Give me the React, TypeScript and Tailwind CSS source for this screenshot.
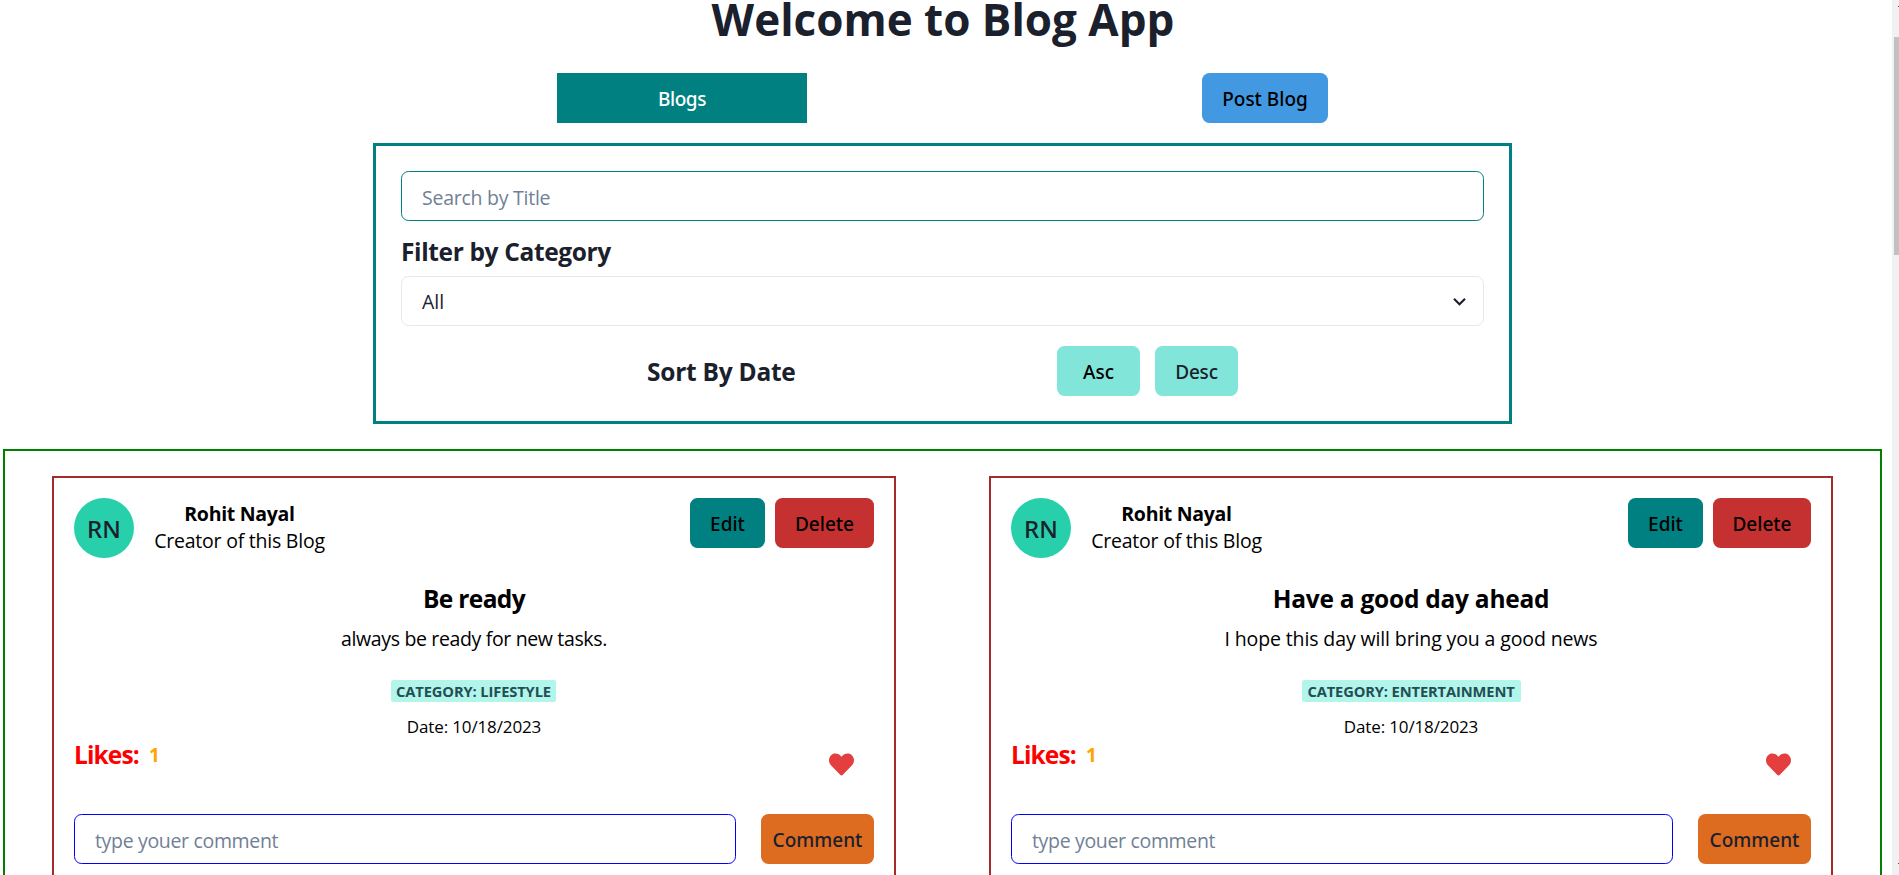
import { FaHeart } from "react-icons/fa";

const BUTTON =
  "flex h-[50px] items-center justify-center rounded-[7.5px] pt-[3px] font-['Noto_Sans'] text-[19px] font-medium";

type Post = {
  title: string;
  titleTracking: string;
  body: string;
  bodyTracking: string;
  category: string;
  badgeWidth: string;
  deleteWidth: string;
};

const POSTS: Post[] = [
  {
    title: "Be ready",
    titleTracking: "tracking-[-0.65px]",
    body: "always be ready for new tasks.",
    bodyTracking: "tracking-[-0.35px]",
    category: "CATEGORY: LIFESTYLE",
    badgeWidth: "w-[165px] mr-px",
    deleteWidth: "w-[99px]",
  },
  {
    title: "Have a good day ahead",
    titleTracking: "tracking-[-0.25px]",
    body: "I hope this day will bring you a good news",
    bodyTracking: "tracking-[-0.12px]",
    category: "CATEGORY: ENTERTAINMENT",
    badgeWidth: "w-[219px]",
    deleteWidth: "w-[98px]",
  },
];

function PostCard({ post }: { post: Post }) {
  return (
    <article className="flex w-[844px] flex-col border-2 border-[#a52a2a] p-5 text-black">
      <header className="flex h-[60px] items-start">
        <div className="flex size-[60px] items-center justify-center rounded-full bg-[#27cfab] pt-0.5 font-['Noto_Sans'] text-2xl font-medium text-[#1a202c]">
          RN
        </div>
        <div className="ml-[19.5px] mt-0.5 flex w-[172px] flex-col items-center whitespace-nowrap text-[19.5px] leading-[27px]">
          <span className="font-bold tracking-[-0.3px]">Rohit Nayal</span>
          <span className="tracking-[-0.23px]">Creator of this Blog</span>
        </div>
        <div className="ml-auto flex gap-2.5">
          <button className={`${BUTTON} w-[75px] bg-[#008080]`}>Edit</button>
          <button className={`${BUTTON} ${post.deleteWidth} bg-[#c53030]`}>Delete</button>
        </div>
      </header>

      <h2 className={`mt-[22px] text-center text-[24.5px] leading-[37px] font-bold ${post.titleTracking}`}>
        {post.title}
      </h2>
      <p className={`mt-[7px] text-center text-[19.5px] leading-[30px] ${post.bodyTracking}`}>{post.body}</p>
      <span
        className={`mt-[26px] flex h-[22px] items-center justify-center self-center whitespace-nowrap rounded-[2.5px] bg-[#b2f5ea] text-[14.7px] font-bold tracking-[-0.12px] text-[#234e52] ${post.badgeWidth}`}
      >
        {post.category}
      </span>
      <p className="mt-3.5 text-center text-[17px] leading-[22px] tracking-[-0.14px]">Date: 10/18/2023</p>

      <div className="flex h-[76px] items-start justify-between pr-5">
        <div className="flex items-center font-bold leading-[34px]">
          <span className="w-[75px] text-[24.5px] tracking-[-0.9px] text-[#ff0000]">Likes:</span>
          <span className="font-['Noto_Sans'] text-[19px] text-[#ffa500]">1</span>
        </div>
        <FaHeart className="mt-3.5 size-[25px] text-[#e53e3e]" />
      </div>

      <div className="flex gap-[25px]">
        <input
          placeholder="type youer comment"
          className="h-[50px] w-[662px] rounded-[7.5px] border border-[#0000ff] px-5 pt-[3px] text-[19.5px] tracking-[-0.33px] placeholder:text-[#718096]"
        />
        <button className={`${BUTTON} w-[113px] bg-[#dd6b20] text-[#1a202c]`}>Comment</button>
      </div>
    </article>
  );
}

export default function App() {
  return (
    <div className="flex h-[875px] w-[1899px] overflow-hidden bg-white font-['Open_Sans',sans-serif] text-[#1a202c]">
      <main className="mr-[7px] flex h-[1100px] w-[1885px] shrink-0 flex-col items-center">
        <h1 className="pl-px text-[44px] leading-[38px] font-bold">Welcome to Blog App</h1>

        <nav className="mt-[35px] flex w-[771px] justify-between">
          <a className="flex h-[50px] w-[250px] items-center justify-center bg-[#008080] pt-[3px] font-['Noto_Sans'] text-[19px] font-medium tracking-[-0.4px] text-white">
            Blogs
          </a>
          <button className={`${BUTTON} w-[126px] bg-[#4299e1] text-black`}>Post Blog</button>
        </nav>

        <section className="mt-5 flex w-[1139px] flex-col border-[3px] border-[#008080] p-[25px]">
          <input
            placeholder="Search by Title"
            className="h-[50px] rounded-[7.5px] border border-[#008080] px-5 pt-0.5 text-[19.5px] tracking-[-0.25px] placeholder:text-[#718096]"
          />
          <h2 className="mt-3 mb-1.5 text-[24.5px] leading-[37px] font-bold tracking-[-0.36px]">Filter by Category</h2>
          <div className="flex h-[50px] items-center justify-between rounded-[7.5px] border border-[#e2e8f0] pr-[11px] pl-5">
            <span className="pt-0.5 text-[19.5px]">All</span>
            <svg viewBox="0 0 24 24" className="size-[25px]" fill="currentColor">
              <path d="M16.59 8.59L12 13.17 7.41 8.59 6 10l6 6 6-6z" />
            </svg>
          </div>
          <div className="mt-5 flex items-center pl-[246px]">
            <h2 className="w-[410px] pt-0.5 text-[24.5px] font-bold tracking-[-0.25px]">Sort By Date</h2>
            <div className="flex gap-[15px]">
              <button className={`${BUTTON} w-[83px] bg-[#81e6d9] text-black`}>Asc</button>
              <button className={`${BUTTON} w-[83px] bg-[#81e6d9] tracking-[-0.2px]`}>Desc</button>
            </div>
          </div>
        </section>

        <section className="mt-[25px] flex w-[1879px] grow gap-[93px] border-2 border-[#008000] px-[47px] pt-[25px]">
          {POSTS.map((post) => (
            <PostCard key={post.title} post={post} />
          ))}
        </section>
      </main>

      <div className="flex w-[7px] shrink-0 flex-col items-end bg-[#f1f1f1]">
        <div className="mt-1.5 h-px w-px bg-[#505050]" />
        <div className="mt-[30px] h-[218px] w-[5px] bg-[#c1c1c1]" />
        <div className="mt-[608px] h-px w-px bg-[#505050]" />
      </div>
    </div>
  );
}
